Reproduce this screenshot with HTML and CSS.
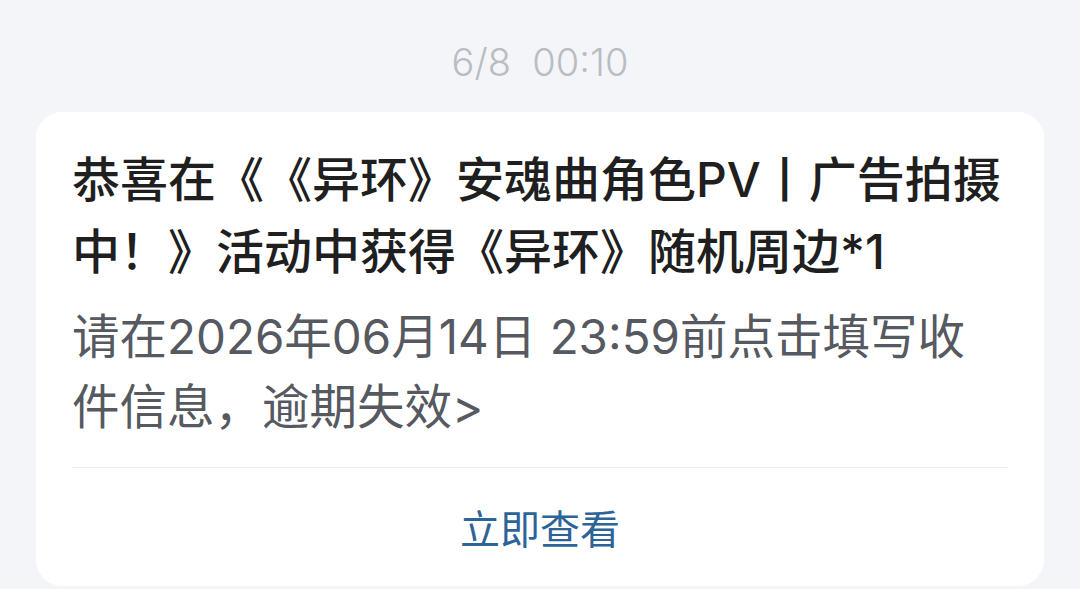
FILE: index.html
```html
<!DOCTYPE html>
<html lang="zh-CN">
<head>
<meta charset="utf-8">
<title>消息</title>
<link rel="stylesheet" href="styles.css">
</head>
<body>
<div class="page">
  <div class="time">6/8&nbsp;&nbsp;00:10</div>
  <div class="card">
    <div class="content">
      <div class="title">恭喜在《《异环》安魂曲角色PV丨广告拍摄中！》活动中获得《异环》随机周边*1</div>
      <div class="desc">请在2026年06月14日 23:59前点击填写收件信息，逾期失效&gt;</div>
    </div>
    <div class="divider"></div>
    <div class="action">立即查看</div>
  </div>
</div>
</body>
</html>
```
FILE: styles.css
```css
* { box-sizing: border-box; }
html, body {
  margin: 0;
  padding: 0;
  background: #f3f5f8;
  font-family: "Inter", "Noto Sans CJK SC", sans-serif;
}
.page {
  width: 1080px;
  height: 589px;
  overflow: hidden;
  display: flex;
  flex-direction: column;
  align-items: center;
}
.time {
  padding-top: 40px;
  height: 112px;
  line-height: 44px;
  font-size: 38px;
  font-weight: 300;
  color: #b9bcc1;
  text-align: center;
}
.card {
  width: 1008px;
  background: #ffffff;
  border-radius: 26px;
  padding: 32px 36px 0 36px;
  display: flex;
  flex-direction: column;
}
.content {
  text-spacing-trim: space-all;
}
.title {
  font-size: 48px;
  line-height: 72px;
  font-weight: 500;
  color: #1f1f1f;
}
.desc {
  margin-top: 14px;
  margin-right: 30px;
  font-size: 47.5px;
  line-height: 70px;
  color: #56595f;
}
.divider {
  margin-top: 25px;
  height: 1px;
  background: #eceef1;
}
.action {
  height: 118px;
  display: flex;
  align-items: center;
  justify-content: center;
  font-size: 40px;
  color: #2c6498;
}
```
